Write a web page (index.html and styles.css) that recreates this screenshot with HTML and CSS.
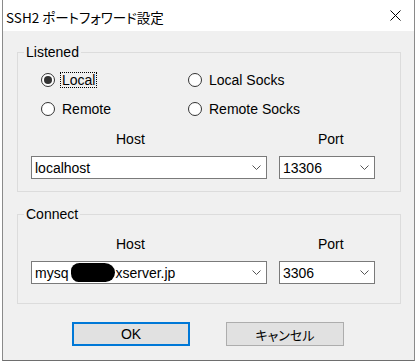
FILE: index.html
```html
<!DOCTYPE html>
<html lang="ja">
<head>
<meta charset="utf-8">
<title>SSH2 ポートフォワード設定</title>
<link rel="stylesheet" href="styles.css">
</head>
<body>
<div class="window">
  <div class="titlebar">
    <span class="title">SSH2 ポートフォワード設定</span>
    <svg class="close" width="11" height="11" viewBox="0 0 11 11"><path d="M0.5 0.5L10.5 10.5M10.5 0.5L0.5 10.5" stroke="#000" stroke-width="1" fill="none"/></svg>
  </div>
  <div class="client">
    <fieldset class="group listened">
      <legend>Listened</legend>
      <div class="radios">
        <div class="radio"><span class="circle checked"></span><span class="rtext focus">Local</span></div>
        <div class="radio"><span class="circle"></span><span class="rtext">Local Socks</span></div>
        <div class="radio"><span class="circle"></span><span class="rtext">Remote</span></div>
        <div class="radio"><span class="circle"></span><span class="rtext">Remote Socks</span></div>
      </div>
      <div class="fields">
        <div class="lbl lbl-host">Host</div>
        <div class="lbl lbl-port">Port</div>
        <div class="combo"><span class="value">localhost</span><svg class="chev" width="9" height="5" viewBox="0 0 9 5"><polyline points="0.5,0.5 4.5,4.5 8.5,0.5" stroke="#555" fill="none"/></svg></div>
        <div class="combo"><span class="value">13306</span><svg class="chev" width="9" height="5" viewBox="0 0 9 5"><polyline points="0.5,0.5 4.5,4.5 8.5,0.5" stroke="#555" fill="none"/></svg></div>
      </div>
    </fieldset>
    <fieldset class="group connect">
      <legend>Connect</legend>
      <div class="fields">
        <div class="lbl lbl-host">Host</div>
        <div class="lbl lbl-port">Port</div>
        <div class="combo"><span class="value">mysq<span class="redact"></span>xserver.jp</span><svg class="chev" width="9" height="5" viewBox="0 0 9 5"><polyline points="0.5,0.5 4.5,4.5 8.5,0.5" stroke="#555" fill="none"/></svg></div>
        <div class="combo"><span class="value">3306</span><svg class="chev" width="9" height="5" viewBox="0 0 9 5"><polyline points="0.5,0.5 4.5,4.5 8.5,0.5" stroke="#555" fill="none"/></svg></div>
      </div>
    </fieldset>
    <div class="buttons">
      <div class="btn btn-default">OK</div>
      <div class="btn btn-cjk">キャンセル</div>
    </div>
  </div>
</div>
</body>
</html>
```
FILE: styles.css
```css
html, body {
  margin: 0;
  padding: 0;
  background: #ffffff;
}
body {
  width: 418px;
  height: 363px;
  overflow: hidden;
  font-family: "Liberation Sans", "Noto Sans CJK JP", sans-serif;
  font-size: 14px;
  color: #000;
}
.window {
  box-sizing: border-box;
  margin-left: 2px;
  width: 413px;
  height: 361px;
  background: #f0f0f0;
  border-left: 1px solid #8a8a8a;
  border-right: 1px solid #8a8a8a;
  border-bottom: 1px solid #6e6e6e;
  display: flex;
  flex-direction: column;
}
.titlebar {
  height: 31px;
  flex: none;
  background: #fff;
  display: flex;
  align-items: center;
  padding: 3px 0 0 3px;
  box-sizing: border-box;
}
.title {
  font-family: "Noto Sans CJK JP", sans-serif;
  font-feature-settings: "palt";
  font-size: 13.5px;
  line-height: 17px;
}
.close {
  margin-left: auto;
  margin-right: 13px;
  margin-top: -3px;
}
.client {
  display: flex;
  flex-direction: column;
}
.group {
  box-sizing: border-box;
  width: 384px;
  margin: 0 0 0 14px;
  padding: 0;
  border: 1px solid #dcdcdc;
  min-width: 0;
}
.group legend {
  margin-left: 6px;
  padding: 0 2px;
  line-height: 17px;
}
.listened {
  margin-top: 13px;
  padding-bottom: 12px;
}
.connect {
  margin-top: 14px;
  padding-bottom: 19px;
}
.radios {
  display: grid;
  grid-template-columns: 147px auto;
  grid-auto-rows: 29px;
  padding: 4px 0 0 23px;
}
.radio {
  display: flex;
  align-items: center;
}
.circle {
  box-sizing: border-box;
  width: 14px;
  height: 14px;
  border: 1px solid #333;
  border-radius: 50%;
  background: #fff;
  display: flex;
  align-items: center;
  justify-content: center;
  margin-right: 5px;
}
.circle.checked::after {
  content: "";
  width: 8px;
  height: 8px;
  border-radius: 50%;
  background: #333;
}
.rtext {
  border: 1px solid transparent;
  padding: 0 1px;
  line-height: 14px;
}
.rtext.focus {
  border: 1px dotted #000;
}
.fields {
  display: grid;
  grid-template-columns: 236px 96px;
  column-gap: 12px;
  row-gap: 8px;
  margin-left: 13px;
}
.listened .fields {
  margin-top: 8px;
}
.connect .fields {
  margin-top: 13px;
}
.lbl {
  line-height: 17px;
}
.lbl-host {
  padding-left: 85px;
}
.lbl-port {
  padding-left: 39px;
}
.combo {
  box-sizing: border-box;
  height: 23px;
  background: #fff;
  border: 1px solid #7a7a7a;
  display: flex;
  align-items: center;
  justify-content: space-between;
  padding: 0 5px 0 3px;
}
.value {
  display: flex;
  align-items: center;
  white-space: nowrap;
}
.redact {
  display: inline-block;
  width: 44px;
  height: 19px;
  margin-left: 3px;
  background: #000;
  border-radius: 9px 11px 10px 8px / 8px 10px 10px 9px;
}
.buttons {
  display: flex;
  gap: 36px;
  margin: 18px 0 0 69px;
}
.btn {
  box-sizing: border-box;
  width: 118px;
  height: 24px;
  background: #e1e1e1;
  border: 1px solid #adadad;
  display: flex;
  align-items: center;
  justify-content: center;
}
.btn-default {
  border: 2px solid #0078d7;
}
.btn-cjk {
  font-family: "Noto Sans CJK JP", sans-serif;
  font-feature-settings: "palt";
  font-size: 13px;
}
```
